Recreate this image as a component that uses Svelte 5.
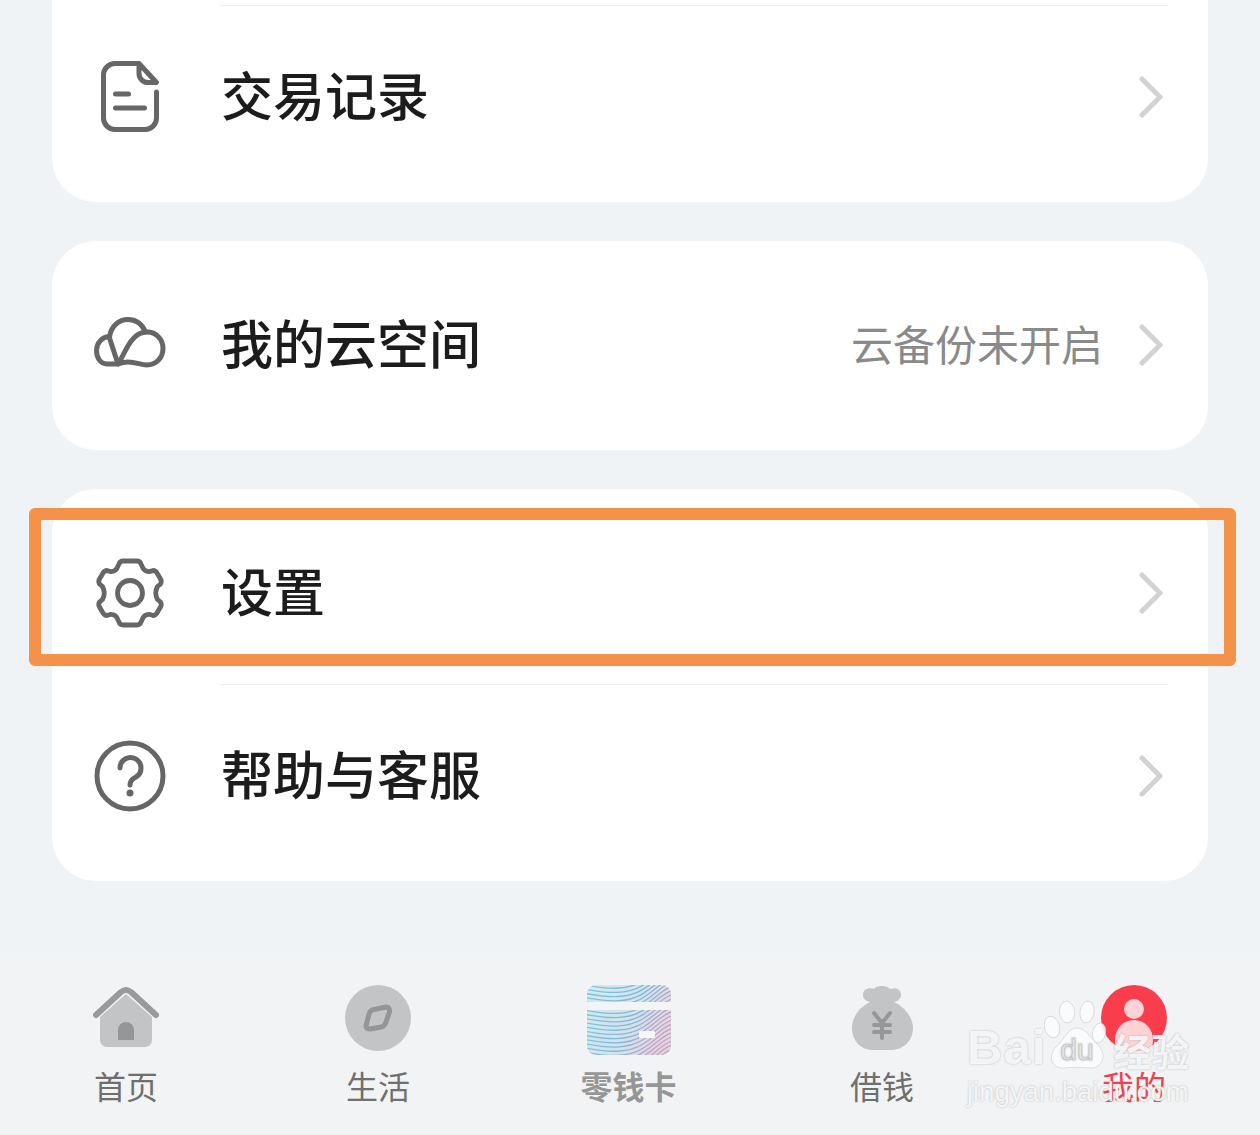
<script>
  const rows1 = [{ label: '交易记录', icon: 'doc' }];
  const waves = Array.from({ length: 27 }, (_, i) => i * 4.2 - 10);
</script>

{#snippet chevron()}
  <svg class="chevron" viewBox="0 0 24 42" aria-hidden="true">
    <path d="M3 3 L21 21 L3 39" fill="none" stroke="#d2d2d2" stroke-width="5" stroke-linecap="round" stroke-linejoin="round" />
  </svg>
{/snippet}

<div class="page">
  <section class="card first">
    <div class="divider"></div>
    {#each rows1 as row}
      <div class="row">
        <span class="icon">
          <svg viewBox="0 0 72 72" width="72" height="72" fill="none" stroke="#666" stroke-width="5" stroke-linecap="round" stroke-linejoin="round">
            <path d="M62.500 31 V57 a11.500 11.500 0 0 1 -11.500 11.500 H21 a11.500 11.500 0 0 1 -11.500 -11.500 V14 a11.500 11.500 0 0 1 11.500 -11.500 H45 L62.500 21.500 H54 a9 9 0 0 1 -9 -9 V2.500" />
            <path d="M21.500 33 H34.500 M21.500 47 H50.500" />
          </svg>
        </span>
        <span class="label">{row.label}</span>
        {@render chevron()}
      </div>
    {/each}
  </section>

  <section class="card">
    <div class="row">
      <span class="icon">
        <svg viewBox="0 0 72 72" width="72" height="72" fill="none" stroke="#666" stroke-width="5" stroke-linecap="round" stroke-linejoin="round">
          <path d="M24 55 H13 C6 55 2.500 48 2.500 41.500 C2.500 34 8 28 15 27.500 L24 55" />
          <path d="M15.500 28 C17 17 25 10.500 34 10.500 C42 10.500 48 15 51.500 23" />
          <path d="M24 55 C30 46 33 36 39 30 C43 25 48 23 53 23 C62 23 69 30 69 39.500 C69 49 62 56 53 56 C47 56 42 53 34 53 C30 53 27 54 24 55 Z" />
        </svg>
      </span>
      <span class="label">我的云空间</span>
      <span class="value">云备份未开启</span>
      {@render chevron()}
    </div>
  </section>

  <section class="card">
    <div class="row">
      <span class="icon">
        <svg viewBox="0 0 72 72" width="72" height="72" fill="none" stroke="#666" stroke-width="4.800" stroke-linejoin="round">
          <path d="M29 4 H43 Q46 4 47 7 L48 9 Q50 15 56 14.500 L59 13.500 Q61.500 13.500 63 16 L66.500 22 Q68 24.500 66.500 27 L63.500 29.500 Q60 36 63.500 42.500 L66.500 45 Q68 47.500 66.500 50 L63 56 Q61.500 58.500 59 58.500 L56 57.500 Q50 57 48 63 L47 65 Q46 68 43 68 H29 Q26 68 25 65 L24 63 Q22 57 16 57.500 L13 58.500 Q10.500 58.500 9 56 L5.500 50 Q4 47.500 5.500 45 L8.500 42.500 Q12 36 8.500 29.500 L5.500 27 Q4 24.500 5.500 22 L9 16 Q10.500 13.500 13 13.500 L16 14.500 Q22 15 24 9 L25 7 Q26 4 29 4 Z" />
          <circle cx="36" cy="36" r="12.500" />
        </svg>
      </span>
      <span class="label">设置</span>
      {@render chevron()}
    </div>
    <div class="divider"></div>
    <div class="row">
      <span class="icon">
        <svg viewBox="0 0 72 72" width="72" height="72" fill="none" stroke="#666" stroke-width="5" stroke-linecap="round">
          <circle cx="36" cy="36" r="33" />
          <path d="M26 28 A10.500 10.500 0 1 1 42 37 C38 39 36 41 36 45" />
          <circle cx="36" cy="53" r="3.500" fill="#666" stroke="none" />
        </svg>
      </span>
      <span class="label">帮助与客服</span>
      {@render chevron()}
    </div>
  </section>

  <nav class="tabs">
    <div class="tab">
      <svg viewBox="0 0 66 66" width="66" height="66">
        <path d="M33 9 L59 32 V55 a7 7 0 0 1 -7 7 H14 a7 7 0 0 1 -7 -7 V32 Z" fill="#c3c4c6" />
        <path d="M3 30 L28 7 Q33 3 38 7 L63 30" fill="none" stroke="#999a9c" stroke-width="6" stroke-linecap="round" stroke-linejoin="round" />
        <path d="M25 55 V45 a8 8 0 0 1 16 0 V55 Z" fill="#959698" />
      </svg>
      <span>首页</span>
    </div>
    <div class="tab">
      <svg viewBox="0 0 66 66" width="66" height="66">
        <circle cx="33" cy="33" r="33" fill="#c3c4c6" />
        <path d="M27 25 L41 22 Q45 22 44.500 27 L41 37 Q40 41 36 42 L25 44 Q20 44 21.500 39 L24 29 Q25 26 27 25 Z" fill="none" stroke="#949597" stroke-width="5" stroke-linejoin="round" />
      </svg>
      <span>生活</span>
    </div>
    <div class="tab faded">
      <svg class="wave-card" viewBox="0 0 84 70" width="84" height="70">
        <defs>
          <linearGradient id="cardfill" x1="0" y1="0" x2="1" y2="0.6">
            <stop offset="0" stop-color="#cfebf1" />
            <stop offset="0.55" stop-color="#cfe4f1" />
            <stop offset="1" stop-color="#e2d6e5" />
          </linearGradient>
          <linearGradient id="cardline" gradientUnits="userSpaceOnUse" x1="0" y1="0" x2="84" y2="30">
            <stop offset="0" stop-color="#7cc6d6" />
            <stop offset="0.6" stop-color="#86b6d2" />
            <stop offset="1" stop-color="#c9a2c0" />
          </linearGradient>
          <clipPath id="cardclip"><rect width="84" height="70" rx="9" /></clipPath>
        </defs>
        <g clip-path="url(#cardclip)">
          <rect width="84" height="70" fill="url(#cardfill)" />
          {#each waves as y}
            <path d="M-2 {y + 10} C20 {y + 14} 40 {y + 16} 56 {y + 6} S76 {y - 12} 86 {y - 14}" fill="none" stroke="url(#cardline)" stroke-width="1.300" />
          {/each}
          <rect x="0" y="17" width="84" height="8" fill="#f3f4f8" />
          <rect x="52" y="46" width="16" height="7" rx="1.500" fill="#f6f7fa" />
        </g>
      </svg>
      <span>零钱卡</span>
    </div>
    <div class="tab">
      <svg viewBox="0 0 66 66" width="66" height="66">
        <path d="M21 17 C14 16 12 9 16 5 C19 3 22 3 25 4 C27 0 38 0 41 4 C44 3 48 3 50 5 C54 9 52 16 45 17 C57 23 64 33 64 43 C64 56 54 65 42 65 H24 C12 65 3 56 3 43 C3 33 9 23 21 17 Z" fill="#c3c4c6" />
        <path d="M25 28 L33 38 L41 28 M33 38 V53 M25 40 H41 M25 47 H41" fill="none" stroke="#969799" stroke-width="4" stroke-linecap="round" stroke-linejoin="round" />
      </svg>
      <span>借钱</span>
    </div>
    <div class="tab active">
      <svg viewBox="0 0 66 66" width="66" height="66">
        <defs><clipPath id="avatarclip"><circle cx="33" cy="33" r="33" /></clipPath></defs>
        <circle cx="33" cy="33" r="33" fill="#f93d4c" />
        <g clip-path="url(#avatarclip)" fill="#ffd2d6">
          <circle cx="33" cy="24" r="10" />
          <ellipse cx="33" cy="55" rx="19" ry="20" />
        </g>
      </svg>
      <span>我的</span>
    </div>
  </nav>

  <div class="watermark">
    <div class="brand">
      <span class="bai">Bai</span>
      <svg class="paw" viewBox="0 0 64 72" width="64" height="72">
        <g fill="#fbfcfd" fill-opacity="0.88" stroke="#d4d5d8" stroke-width="0.8">
          <ellipse cx="8" cy="27" rx="7.500" ry="11" transform="rotate(-15 8 27)" />
          <ellipse cx="23" cy="12" rx="7.500" ry="11" transform="rotate(-5 23 12)" />
          <ellipse cx="43" cy="12" rx="7" ry="11" transform="rotate(8 43 12)" />
          <ellipse cx="55" cy="33" rx="6.500" ry="10" transform="rotate(12 55 33)" />
          <path d="M33 28 C42 28 46 38 54 45 C64 55 58 69 46 68 C38 67 28 67 20 68 C8 69 3 56 12 47 C20 40 24 28 33 28 Z" />
        </g>
        <text x="33" y="60" text-anchor="middle" class="du">du</text>
      </svg>
      <span class="jy">经验</span>
    </div>
    <div class="url">jingyan.baidu.com</div>
  </div>

  <div class="highlight"></div>
</div>

<style>
  :global(body) {
    margin: 0;
  }

  .page {
    position: relative;
    width: 1260px;
    height: 1135px;
    overflow: hidden;
    box-sizing: border-box;
    padding: 0 52px;
    background: #f0f3f6;
    font-family: "Noto Sans CJK SC", "Liberation Sans", sans-serif;
    color: #1c1c1c;
    display: flex;
    flex-direction: column;
    gap: 39px;
  }

  .card {
    background: #fff;
    border-radius: 44px;
    padding: 13px 0 14px;
  }

  .card.first {
    padding-top: 5px;
    border-radius: 0 0 44px 44px;
  }

  .divider {
    height: 1px;
    margin: 0 40px 0 168px;
    background: #eeeeee;
  }

  .row {
    height: 182px;
    display: flex;
    align-items: center;
    padding: 0 45px 0 42px;
  }

  .icon {
    width: 72px;
    height: 72px;
    margin-right: 55px;
    flex: none;
  }

  .icon svg {
    display: block;
  }

  .label {
    flex: 1;
    font-size: 52px;
    font-weight: 500;
    line-height: 60px;
    margin-bottom: 6px;
  }

  .value {
    font-size: 42px;
    line-height: 50px;
    color: #8a8a8a;
    margin-right: 36px;
    margin-bottom: 4px;
  }

  .chevron {
    width: 24px;
    height: 42px;
    flex: none;
  }

  .tabs {
    position: absolute;
    left: 0;
    right: 0;
    bottom: 0;
    height: 185px;
    display: grid;
    grid-template-columns: repeat(5, 252px);
    background: linear-gradient(#f0f3f6, #f2f3f5 12px);
  }

  .tab {
    display: flex;
    flex-direction: column;
    align-items: center;
    padding-top: 35px;
    font-size: 32px;
    line-height: 40px;
    color: #6f6f6f;
  }

  .tab svg {
    display: block;
    margin-bottom: 14px;
  }

  .tab.faded {
    color: #969696;
    font-weight: 700;
    padding-right: 3px;
  }

  .tab.faded svg {
    margin-bottom: 10px;
  }

  .tab.active {
    color: #f0404c;
  }

  .watermark {
    position: absolute;
    left: 967px;
    top: 1000px;
    width: 230px;
    color: rgba(252, 253, 254, 0.88);
    text-shadow: 0 0 2px rgba(150, 151, 154, 0.7);
  }

  .brand {
    display: flex;
    align-items: flex-end;
    height: 72px;
  }

  .bai {
    font-family: "Liberation Sans", sans-serif;
    font-size: 49px;
    line-height: 56px;
    letter-spacing: 1px;
    font-weight: 700;
    margin-bottom: -3px;
  }

  .paw {
    margin-left: -2px;
    flex: none;
  }

  .du {
    font-family: "Liberation Sans", sans-serif;
    font-size: 30px;
    fill: #f1f2f3;
    stroke: #c4c5c8;
    stroke-width: 0.6;
  }

  .jy {
    font-size: 38px;
    font-weight: 700;
    line-height: 56px;
    margin-left: 5px;
    margin-bottom: -6px;
    white-space: nowrap;
  }

  .url {
    font-family: "Liberation Sans", sans-serif;
    font-size: 27.500px;
    line-height: 30px;
    white-space: nowrap;
    margin-top: 5px;
  }

  .highlight {
    position: absolute;
    left: 29px;
    top: 508px;
    width: 1207px;
    height: 158px;
    box-sizing: border-box;
    border: 12px solid #f4924a;
    border-radius: 6px;
  }
</style>
